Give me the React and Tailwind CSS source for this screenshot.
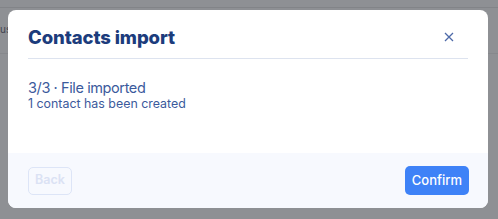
export default function App() {
  return (
    <div className="relative w-[498px] h-[219px] overflow-hidden bg-[#8e9094] font-['Inter',sans-serif]">
      {/* page behind the overlay */}
      <div className="absolute inset-x-0 top-[7px] h-px bg-[#828488]" />
      <div className="absolute left-0 top-[22px] text-[10px] text-[#3f4450]">us</div>
      <div className="absolute inset-x-0 top-[53px] h-px bg-[#86888c]" />

      <div className="absolute left-[8px] top-[10px] w-[480px] h-[198px] rounded-[8px] bg-white overflow-hidden flex flex-col">
        <div className="mx-[20px] h-[49px] flex items-center justify-between border-b border-[#dde3ef]">
          <h1 className="text-[18.5px] font-extrabold text-[#1c3c7c] tracking-[-0.1px] pt-[7px]">Contacts import</h1>
          <button className="mr-[14px] mt-[6px] text-[#4e6aa8]">
            <svg width="10" height="10" viewBox="0 0 10 10" fill="none" stroke="currentColor" strokeWidth="1.3">
              <path d="M1 1l8 8M9 1l-8 8" />
            </svg>
          </button>
        </div>
        <div className="flex-1 px-[20px] pt-[20px]">
          <p className="text-[14.5px] leading-[18px] tracking-[-0.4px] text-[#3b5a9c]">3/3 · File imported</p>
          <p className="text-[12.4px] leading-[14px] text-[#3b5a9c]">1 contact has been created</p>
        </div>
        <div className="h-[55px] bg-[#f7f9fe] flex items-center justify-between pl-[20px] pr-[19px]">
          <button className="h-[28px] px-[6px] rounded-[5px] border border-[#dde5f7] text-[12.5px] font-semibold text-[#dbe2f4]">
            Back
          </button>
          <button className="h-[29px] px-[7px] rounded-[5px] bg-[#3e82f7] text-[13px] font-medium text-white">
            Confirm
          </button>
        </div>
      </div>
    </div>
  );
}
